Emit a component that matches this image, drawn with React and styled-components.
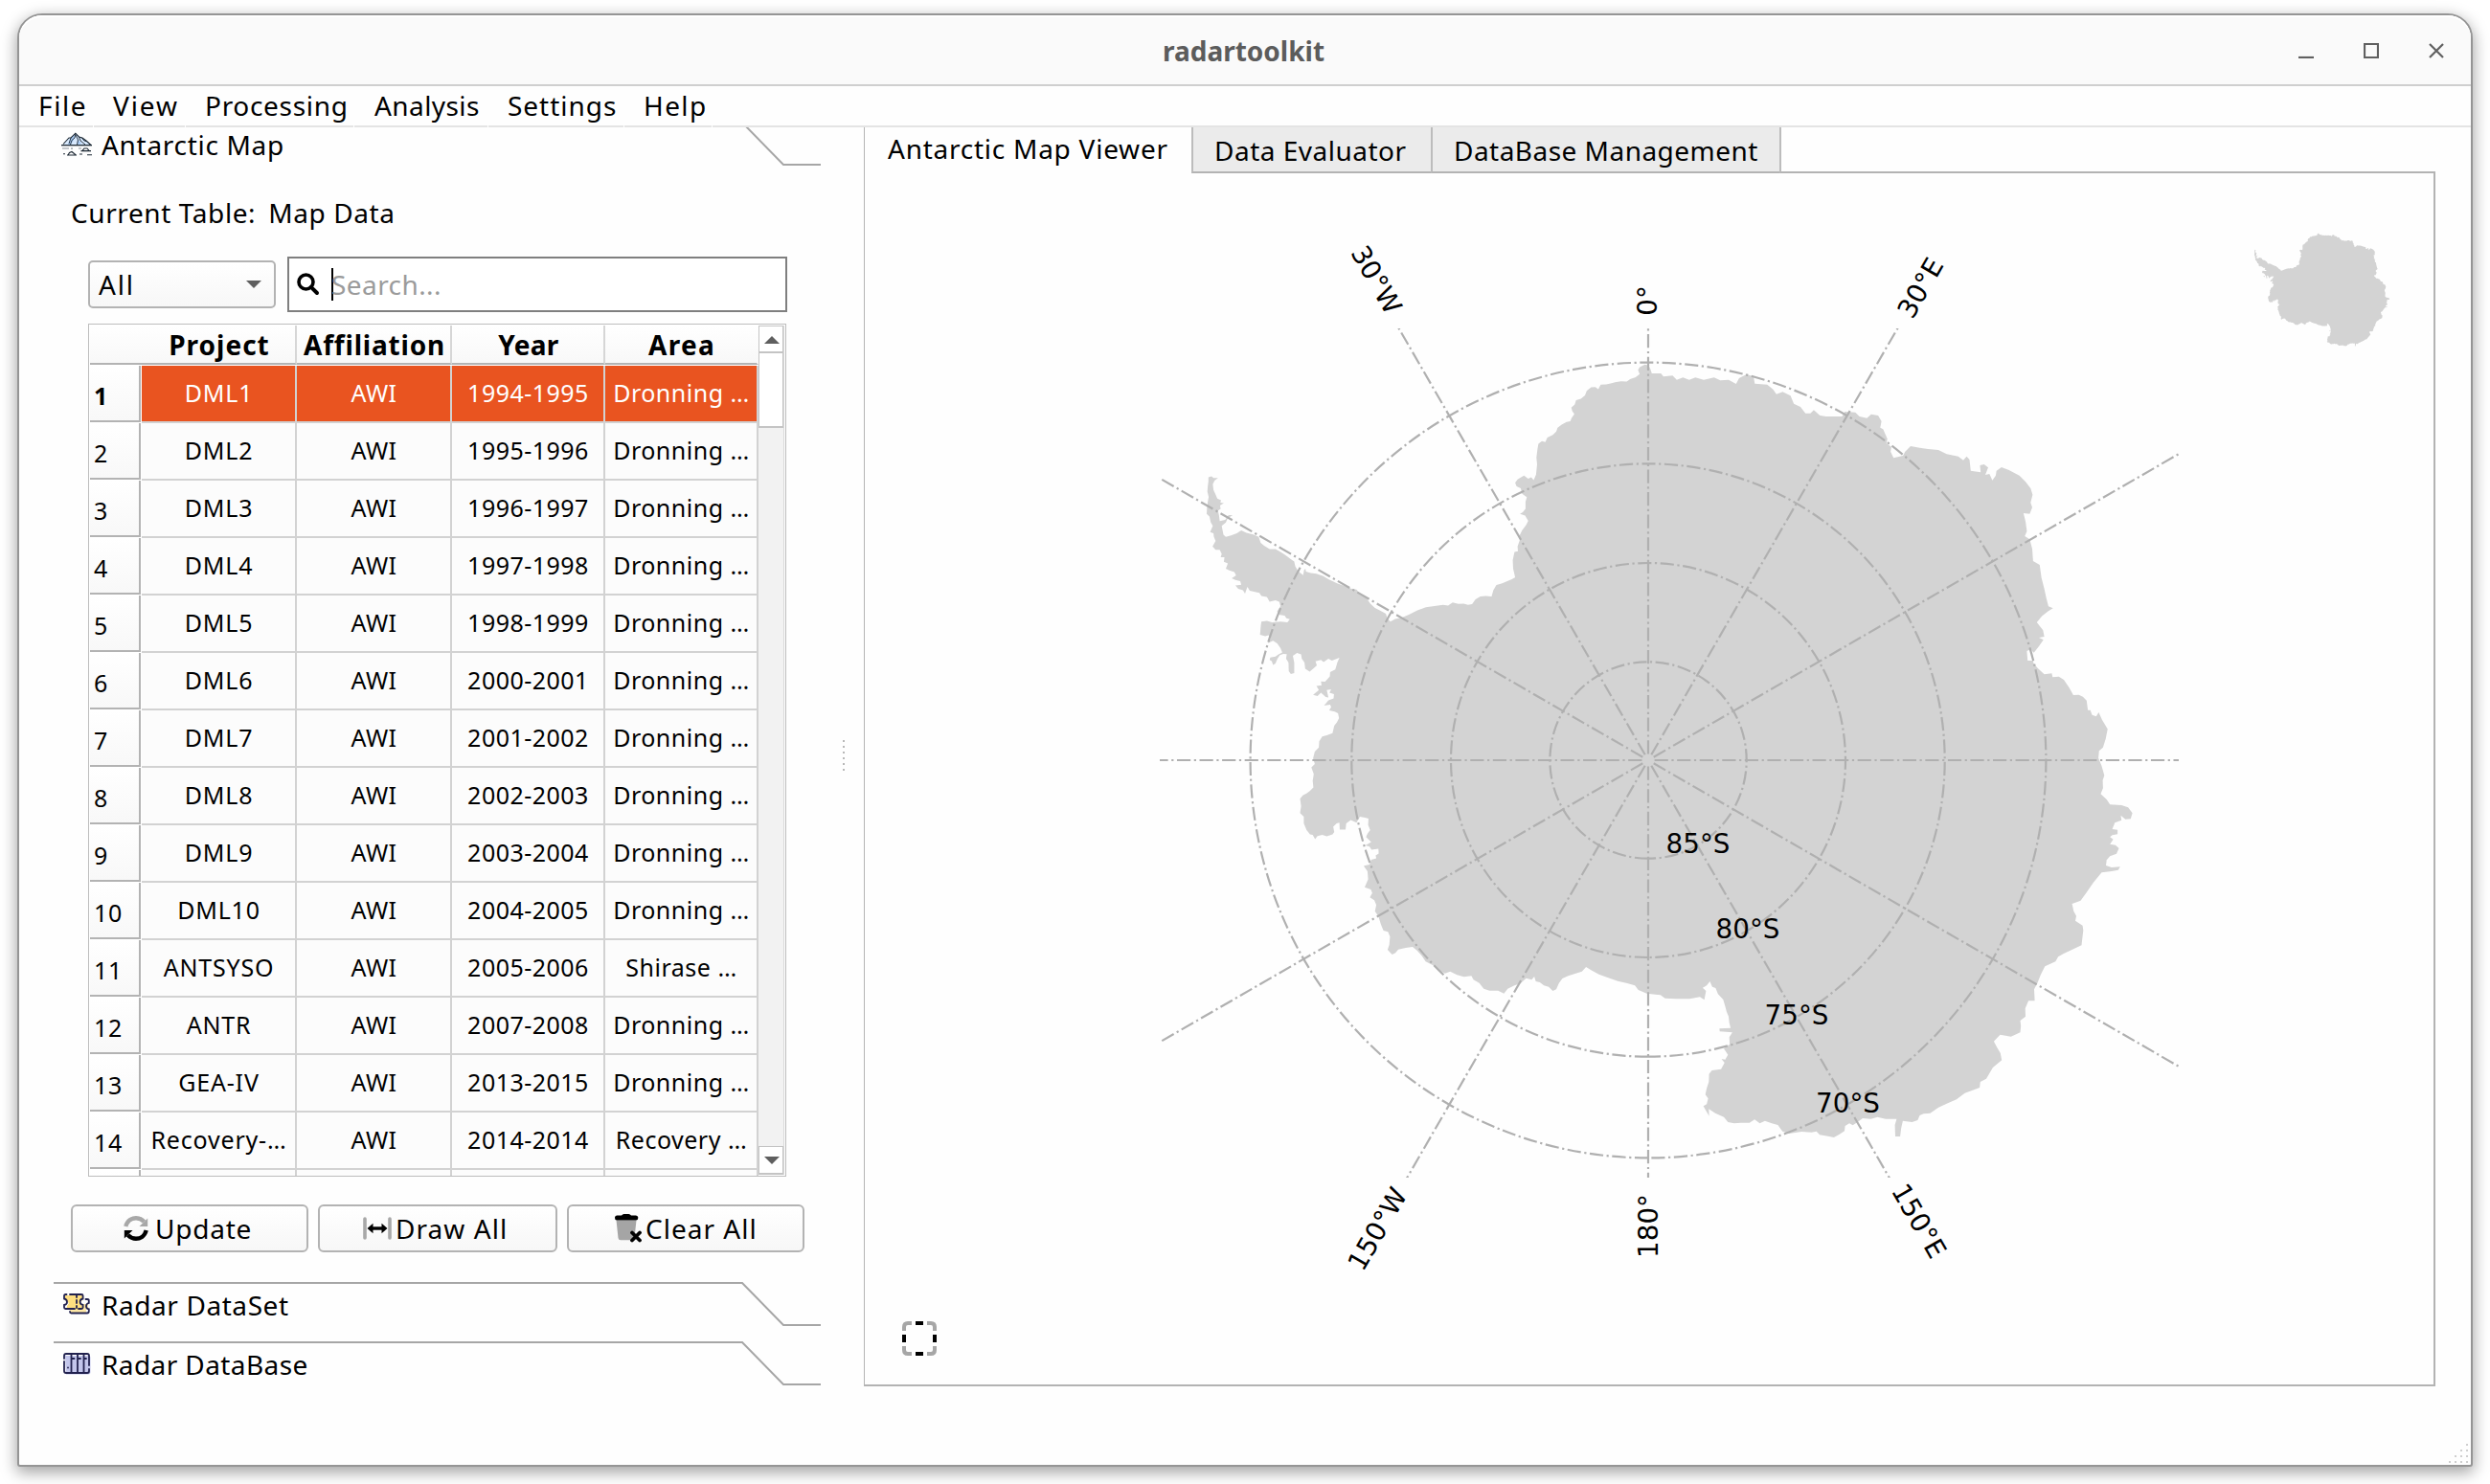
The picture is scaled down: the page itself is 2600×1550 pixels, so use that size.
import React from "react";
import styled, { createGlobalStyle, css } from "styled-components";

const GlobalStyle = createGlobalStyle`
  * { box-sizing: border-box; }
  body {
    margin: 0;
    background: #fff;
    color: #000;
    font-family: "Noto Sans", "Open Sans", sans-serif;
    font-size: 28px;
  }
`;

/* ---------- window ---------- */

const Desktop = styled.div`
  width: 2600px;
  height: 1550px;
  padding: 14px 18px 18px;
  overflow: hidden;
`;

const Window = styled.main`
  width: 2564px;
  height: 1518px;
  display: flex;
  flex-direction: column;
  border: 2px solid #959595;
  border-radius: 26px 26px 3px 3px;
  background: #fefefe;
  box-shadow: 0 5px 16px 1px rgba(0, 0, 0, 0.36);
`;

const TitleBar = styled.header`
  height: 74px;
  flex: none;
  display: grid;
  grid-template-columns: 1fr auto 1fr;
  align-items: center;
  border-bottom: 2px solid #cfcfcf;
  border-radius: 24px 24px 0 0;
  background: #fafafa;
  box-shadow: inset 0 2px #fff;
`;

const Title = styled.h1`
  grid-column: 2;
  margin: 0 3px 0 0;
  padding-top: 1px;
  font-size: 28px;
  font-weight: 700;
  letter-spacing: 0;
  line-height: 72px;
  color: #5c5c5c;
`;

const WindowButtons = styled.div`
  display: flex;
  justify-content: flex-end;
  gap: 52px;
  padding-right: 28px;
`;

const Label = styled.span`
  letter-spacing: ${(p) => p.$track || 0}px;
  white-space: pre;
`;

/* ---------- menu ---------- */

const MenuBar = styled.nav`
  height: 43px;
  flex: none;
  display: flex;
  gap: 1px;
  line-height: 40px;
`;

const MenuItem = styled.div`
  width: ${(p) => p.$width}px;
  padding-left: ${(p) => p.$inset}px;
  border-bottom: 2px solid #e4e4e4;
`;

const MenuRest = styled.div`
  flex: 1;
  border-bottom: 2px solid #e4e4e4;
`;

const Body = styled.div`
  flex: 1;
  min-height: 0;
  display: flex;
  padding: 0 37px 82px 36px;
`;

/* ---------- tool box ---------- */

const ToolBox = styled.aside`
  width: 801px;
  display: flex;
  flex-direction: column;
  gap: 16px;
  overflow: hidden;
`;

const ToolTabRow = styled.div`
  position: relative;
  height: 46px;
  flex: none;
  display: flex;
  padding: 2px 0 0 8px;
  line-height: 44px;
  margin-top: ${(p) => (p.$first ? -6 : 0)}px;
`;

const TabOutline = styled.svg`
  position: absolute;
  inset: 0;
`;

const TabIcon = styled.span`
  width: 42px;
  display: flex;
  align-items: flex-start;
  padding-top: 9px;
`;

const Page = styled.section`
  height: 1134px;
  flex: none;
  display: flex;
  flex-direction: column;
  padding: 13px 17px 0 18px;
`;

const Caption = styled.p`
  margin: 0;
  display: flex;
  gap: 13px;
  line-height: 41px;
  height: 40px;
`;

const FilterRow = styled.div`
  display: flex;
  align-items: center;
  gap: 12px;
  padding-left: 18px;
  margin-top: 26px;
`;

const Combo = styled.div`
  width: 196px;
  height: 50px;
  display: flex;
  align-items: center;
  justify-content: space-between;
  padding: 0 13px 0 9px;
  border: 2px solid #b3b3b3;
  border-radius: 5px;
  background: linear-gradient(#fff, #f7f7f7);
`;

const SearchBox = styled.div`
  width: 522px;
  height: 58px;
  display: flex;
  align-items: center;
  padding-left: 8px;
  border: 2px solid #7f7f7f;
  background: #fff;
  color: #9b9b9b;
`;

const Caret = styled.span`
  width: 2px;
  height: 34px;
  margin: 0 -2px 0 12px;
  background: #000;
`;

/* ---------- table ---------- */

const TableFrame = styled.div`
  width: 729px;
  height: 891px;
  display: flex;
  margin: 12px 0 0 18px;
  padding: 1px 1px 0;
  border: 1px solid #bdbdbd;
  background: #fff;
  overflow: hidden;
`;

const Grid = styled.div`
  width: 698px;
  overflow: hidden;
`;

const Row = styled.div`
  display: grid;
  grid-template-columns: 54px 162px 162px 160px 160px;
`;

const ColumnHead = styled.div`
  height: 41px;
  margin-bottom: 1px;
  padding-left: 2px;
  border-right: ${(p) => (p.$corner ? 0 : 2)}px solid ${(p) => (p.$last ? "transparent" : "#d6d6d6")};
  border-bottom: 2px solid #b3b3b3;
  background: linear-gradient(#fff, #f8f8f8);
  font-weight: 700;
  line-height: 40px;
  text-align: center;
`;

const RowHead = styled.div`
  width: 53px;
  height: 59px;
  padding: 2px 0 0 4px;
  border-right: 2px solid #b3b3b3;
  border-bottom: 2px solid #b3b3b3;
  background: linear-gradient(#fff, #f8f8f8);
  font-size: 25px;
  font-weight: ${(p) => (p.$current ? 700 : 400)};
  letter-spacing: 0.6px;
  line-height: 58px;
`;

const Cell = styled.div`
  height: 60px;
  padding-left: 1px;
  border-right: 2px solid #d2d2d2;
  border-bottom: 2px solid #d2d2d2;
  background: #fcfcfc;
  font-size: 25px;
  line-height: 57px;
  text-align: center;
  letter-spacing: ${(p) => p.$track}px;
  white-space: nowrap;
  ${(p) =>
    p.$selected &&
    css`
      background: #e95420;
      color: #fff;
    `}
`;

const ScrollBar = styled.div`
  width: 27px;
  height: 887px;
  display: flex;
  flex-direction: column;
  background: #f2f2f2;
  border-right: 1px solid #d9d9d9;
`;

const ScrollButton = styled.div`
  height: ${(p) => p.$size}px;
  display: flex;
  align-items: center;
  justify-content: center;
  padding: 1px 0 0 1px;
  border: 1px solid #c4c4c4;
  border-bottom-width: 2px;
  background: #fff;
`;

const ScrollThumb = styled.div`
  height: 78px;
  margin-bottom: auto;
  border: 1px solid #c4c4c4;
  border-top: 0;
  border-bottom-width: 2px;
  background: #fff;
`;

/* ---------- buttons ---------- */

const ButtonRow = styled.div`
  display: flex;
  gap: 10px;
  margin-top: 29px;
`;

const Button = styled.button`
  width: ${(p) => p.$width}px;
  height: 50px;
  display: flex;
  align-items: center;
  gap: ${(p) => p.$gap || 4}px;
  padding: 0 0 0 ${(p) => p.$inset}px;
  border: 2px solid #b3b3b3;
  border-radius: 6px;
  background: linear-gradient(#fff, #f7f7f7);
  color: #000;
  font: inherit;
  line-height: 46px;
`;

/* ---------- splitter and viewer ---------- */

const Splitter = styled.div`
  width: 45px;
  display: flex;
  flex-direction: column;
  align-items: center;
  gap: 4px;
  padding: 640px 0 0 3px;
`;

const SplitDot = styled.i`
  width: 2px;
  height: 2px;
  background: #b8b8b8;
`;

const Viewer = styled.section`
  flex: 1;
  display: flex;
  flex-direction: column;
`;

const TabBar = styled.div`
  height: 48px;
  flex: none;
  display: flex;
  align-items: stretch;
`;

const ViewerTab = styled.div`
  width: ${(p) => p.$width}px;
  padding-left: ${(p) => p.$inset}px;
  border-left: ${(p) => (p.$active ? "1px solid #b5b5b5" : "2px solid #bcbcbc")};
  ${(p) =>
    p.$active
      ? css`
          line-height: 44px;
        `
      : css`
          border-bottom: 2px solid #b3b3b3;
          background: #ebebeb;
          line-height: 48px;
        `}
`;

const TabBarRest = styled.div`
  flex: 1;
  border-left: 2px solid #bcbcbc;
  border-bottom: 2px solid #b3b3b3;
`;

const ViewerPanel = styled.div`
  flex: 1;
  display: flex;
  flex-direction: column;
  border: 2px solid #b3b3b3;
  border-top: 0;
  border-left: 1px solid #b5b5b5;
`;

const MapToolbar = styled.div`
  padding: 24px 0 0 39px;
`;

const Block = styled.svg`
  display: block;
  flex: none;
`;

const Grip = styled.svg`
  position: absolute;
  left: 2555px;
  top: 1506px;
`;

/* ---------- drawings ---------- */

const MountainIcon = () => (
  <Block width="34" height="26" viewBox="0 0 34 26" fill="none" stroke="#1b2733" strokeWidth="1.1">
    <path d="M2 13.5 L7.5 6.5 L9.5 6 L14.8 1 L18 4 L21 5.5 L26 8.5 L31 13.5Z" fill="#d8e9fd" stroke="none" />
    <path d="M7 13 L10 6 L14 2 L13 8 L10 13Z M17 13 L17 7 L21 12Z" fill="#a9cbf5" stroke="none" />
    <path d="M2 12.5 L8 6 L10 6 L14.8 1.2 L18.5 5 L22 6 L26 9 L31 13.5" />
    <path d="M14.8 1.5 L14 6 L11 8.5 L9.5 13 M15 3 L17.5 8 L16.5 13 M18.5 5 L20 9 L25 13 M21.5 6 L24 9 L26 9.5 M10 6 L8 12" strokeWidth="0.9" />
    <path d="M0 13.7 H32" strokeWidth="1.3" />
    <path d="M1 17 H8 M10 17.2 H12 M18 17 H21" strokeWidth="1.2" stroke="#8b949c" />
    <path d="M7 24 L8.5 21.5 L11 20.5 L13.5 22.5 L15 23.6 M6 24 H16 M22 19.3 L24 17 H27 L29 19.3 M20.5 19.6 H31 M2 22.8 H4 M19 23 H22 M27 23.8 H32" />
  </Block>
);

const TicketsIcon = () => (
  <Block width="32" height="26" viewBox="0 0 32 26" fill="none" stroke="#22224f" strokeWidth="1.8" strokeLinecap="round">
    <path d="M4 3 H22 V8 L19 11 L22 14 V18 H6 V14 L8 11 L4 8Z" fill="#ffdf80" stroke="none" />
    <path d="M22 12 H28 V17 H26 V21 H9 V18 H22Z" fill="#ffe9a8" stroke="none" />
    <path d="M5.5 2 H4.5 Q3 2 3 3.6 V6.5 Q6 7 6 10 Q6 12.5 3 13 V15.5 Q3 17 4.5 17 H14 M9 2 H21 Q22.6 2 22.6 3.5 V6.5 Q19.6 7 19.6 9.8 Q19.6 12.5 22.6 13 V15.5 Q22.6 17 21 17 H18" />
    <path d="M16 3 V5 M16 8 V11 M16 14 V16" />
    <path d="M25.5 7 H27 Q28.8 7 28.8 8.5 V11 Q26 11.7 26 14.2 Q26 16.8 28.8 17.3 V19.5 Q28.8 21.5 27 21.5 H10.5 Q9 21.5 9 20" />
  </Block>
);

const ShelfIcon = () => (
  <Block width="32" height="26" viewBox="0 0 32 26" fill="none" stroke="#22224f" strokeWidth="1.8" strokeLinecap="round">
    <path d="M4 4 H29 Q30.5 4 30.5 6 V21 Q30.5 23.5 28 23.5 H5Z" fill="#c3c6ec" stroke="none" />
    <path d="M3 7 V4 Q3 2 5 2 H27 Q29 2 29 4 V14 M29 18 V20 Q29 22 27 22 H5 Q3 22 3 20 V10" />
    <path d="M10.5 3 V21 M17 3 V21 M23.5 3 V21 M10.5 7 H13.5 M17 7 H20 M23.5 7 H26 M7 16.5 V16.6" />
  </Block>
);

const SearchIcon = () => (
  <Block width="24" height="24" viewBox="0 0 24 24" fill="none" stroke="#000">
    <circle cx="9.5" cy="9.5" r="7.5" strokeWidth="3.6" />
    <path d="M14.8 14.8 L21 21" strokeWidth="4" strokeLinecap="round" />
  </Block>
);

const UpdateIcon = () => (
  <Block width="28" height="28" viewBox="0 0 28 28" fill="none" strokeWidth="4.4">
    <path d="M2.3 12 C4 5.5 9 3.2 13 3.2 C17 3.2 19 4.5 21.5 7" stroke="#a8a8a8" />
    <path d="M25.2 3.5 V12 H16.5Z" fill="#a8a8a8" />
    <path d="M23.7 16 C22 22.5 17 24.8 13 24.8 C9 24.8 7 23.5 4.5 21" stroke="#000" />
    <path d="M0.8 24.5 V16 H9.5Z" fill="#000" />
  </Block>
);

const ExtentIcon = () => (
  <Block width="30" height="24" viewBox="0 0 30 24">
    <path d="M2 2 V22 M28 2 V22" stroke="#a8a8a8" strokeWidth="3.6" strokeLinecap="round" />
    <path d="M8 12 H22" stroke="#000" strokeWidth="3.4" />
    <path d="M4.5 12 L10.5 6.8 V17.2Z M25.5 12 L19.5 6.8 V17.2Z" fill="#000" />
  </Block>
);

const TrashIcon = () => (
  <Block width="28" height="32" viewBox="0 0 28 32">
    <path d="M1.5 7.5 H22.5 L20.5 26 Q20.3 28.2 18 28.2 H6 Q3.8 28.2 3.5 26Z" fill="#a5a5a5" />
    <path d="M2 2.5 H7 Q8 1 9.5 1 H14.5 Q16 1 17 2.5 H22 Q24.3 2.5 24.3 5 Q24.3 7.5 22 7.5 H2 Q0 7.5 0 5 Q0 2.5 2 2.5Z" fill="#000" />
    <path d="M18 20.5 L26 28.5 M26 20.5 L18 28.5" stroke="#000" strokeWidth="3.8" strokeLinecap="round" />
  </Block>
);

const SelectAreaIcon = () => (
  <Block width="36" height="36" viewBox="0 0 36 36" fill="none" strokeWidth="4">
    <path d="M10 2 H6 Q2 2 2 6 V10 M26 2 H30 Q34 2 34 6 V10 M34 26 V30 Q34 34 30 34 H26 M10 34 H6 Q2 34 2 30 V26" stroke="#a6a6a6" />
    <path d="M14 2 H22 M14 34 H22 M2 14 V22 M34 14 V22" stroke="#000" />
  </Block>
);

const Arrow = ({ up }) => (
  <Block width="16" height="8" viewBox="0 0 16 8">
    <path d={up ? "M0 8 L8 0 L16 8Z" : "M0 0 L8 8 L16 0Z"} fill="#5f5f5f" />
  </Block>
);

/* ---------- map ---------- */

/* Coastline digitised in four sheets, each with its own origin and units per map unit. */
const COAST_SHEETS = [
  {
    origin: [1180, 360],
    scale: [2.8, 2.8],
    points:
      "1519,62 1505,58 1490,66 1485,74 1490,86 1478,95 1462,101 1452,108 1435,107 1418,110 1405,113 1392,116 1376,117 1369,130 1360,124 1348,125 1335,135 1330,148 1318,158 1304,162 1300,175 1290,184 1293,195 1299,203 1291,214 1287,224 1276,226 1262,234 1250,243 1246,254 1236,264 1220,272 1214,285 1204,282 1194,290 1191,305 1188,330 1190,350 1187,380 1180,396 1173,388 1164,392 1152,383 1143,388 1133,394 1126,404 1130,414 1142,420 1146,436 1160,446 1156,460 1156,480 1148,490 1140,495 1155,500 1164,515 1158,527 1146,543 1138,560 1140,570 1133,590 1134,604 1124,606 1119,630 1120,655 1126,680 1116,686 1103,692 1086,699 1071,703 1062,718 1057,736 1040,735 1024,736 1010,745 1000,759 988,761 975,757 960,758 943,754 930,763 915,761 890,764 865,768 840,777 815,790 795,798 775,802 761,810 752,800 748,787 730,777 716,770 703,758 690,740 675,733 662,716 648,714 625,705 605,698 580,686 565,677 545,670 528,668 514,664 513,656 509,658 506,674 498,668 490,660 483,648 480,634 468,626 455,616 440,606 425,598 408,598 392,588 382,580 376,562 360,555 340,550 325,543 312,552 295,558 280,562 273,556 270,540 268,530 280,520 285,508 300,498 288,498 278,512 262,516 260,500 257,485 265,480 263,470 274,463 264,462 266,455 255,450 250,438 244,425 242,408 247,398 257,390 244,390 238,385 229,388 229,400 227,415 226,430 230,445 227,460 225,475 224,495 232,503 236,520 242,530 234,548 244,552 245,562 250,574 241,590 250,600 262,600 268,612 265,622 276,622 274,635 286,640 280,655 290,660 305,665 310,675 297,683 308,688 322,692 325,702 308,704 316,714 330,718 336,728 343,708 350,720 362,722 378,726 384,735 400,738 408,752 425,748 436,752 440,764 430,780 434,790 452,792 457,800 467,803 460,812 440,810 415,812 400,808 384,810 382,825 380,848 395,853 405,850 412,858 403,873 418,866 430,874 440,888 445,900 434,906 425,912 410,915 408,922 414,925 418,937 425,932 431,918 438,908 448,904 458,905 456,918 463,930 464,955 470,963 480,960 480,930 476,910 488,902 500,906 502,918 510,930 512,948 525,956 535,948 546,938 542,926 558,922 566,928 580,918 590,924 612,916 606,930 600,950 585,958 584,970 570,986 558,985 560,996 545,998 552,1010 535,1024 548,1028 558,1018 572,1030 580,1032 575,1010 588,1008 583,1018 596,1022 595,1035 580,1040 567,1056 585,1053 588,1060 582,1070 598,1073 608,1078 611,1092 605,1104 597,1114 592,1136 575,1142 562,1146 553,1160 552,1178 540,1190 535,1210 540,1226 530,1236 537,1256 534,1275 536,1295 526,1305 517,1312 505,1318 497,1328 500,1350 497,1370 508,1380 508,1400 516,1420 526,1432 534,1434 541,1446 548,1437 562,1434 575,1438 592,1432 597,1425 594,1410 604,1400 612,1398 613,1418 630,1418 632,1400 645,1390 662,1398 672,1380 690,1384 697,1386 696,1405 702,1420 694,1430 690,1440 705,1455 688,1464 700,1468 706,1477 726,1474 727,1488 718,1494 720,1502 705,1506 700,1520 684,1524",
  },
  {
    origin: [1300, 760],
    scale: [2.8, 3],
    points:
      "348,435 358,450 360,475 350,500 368,507 372,518 365,532 378,541 384,556 380,575 390,592 398,618 405,636 418,640 424,655 422,680 417,696 430,711 440,706 448,695 470,690 490,687 503,698 517,715 528,733 550,745 570,762 585,770 600,764 620,775 640,781 662,778 668,790 685,800 698,818 715,824 740,824 757,833 768,818 788,808 805,802 822,785 838,790 846,780 850,795 862,798 874,808 888,812 900,825 910,820 918,800 928,786 945,778 965,771 985,764 997,750 1012,760 1035,773 1060,783 1090,794 1115,800 1140,808 1150,822 1175,833 1200,836 1215,838 1228,848 1260,850 1300,850 1330,844 1343,853 1348,825 1338,815 1350,808 1359,795 1366,812 1376,816 1383,835 1398,852 1403,870 1408,890 1414,905 1416,925 1420,941 1387,943 1388,952 1416,954 1425,955 1416,970 1417,992 1400,1006 1412,1025 1404,1040 1393,1038 1402,1050 1392,1070 1365,1074 1357,1085 1356,1110 1350,1130 1346,1150 1354,1162 1350,1180 1340,1186 1357,1217 1356,1195 1375,1208 1400,1220 1412,1236 1430,1240 1450,1238 1475,1238 1490,1228 1505,1240 1520,1232 1540,1240 1558,1245",
  },
  {
    origin: [1740, 760],
    scale: [2.904, 3],
    points:
      "352,1265 372,1272 410,1266 440,1268 455,1265 465,1276 490,1280 508,1284 525,1274 540,1264 542,1248 555,1240 565,1246 580,1236 595,1224 620,1226 640,1220 665,1226 698,1226 693,1245 694,1281 709,1281 712,1255 717,1232 745,1236 762,1230 768,1215 780,1210 800,1208 825,1190 850,1178 880,1165 905,1145 950,1128 952,1110 970,1100 990,1065 1017,1042 1013,1020 1003,1003 993,983 1012,962 1045,968 1073,955 1075,935 1073,918 1089,905 1088,880 1098,856 1117,856 1115,820 1125,800 1135,775 1148,748 1180,733 1188,718 1205,708 1225,698 1259,682 1264,635 1262,620 1240,605 1243,590 1235,575 1230,552 1256,542 1275,515 1295,485 1320,454 1350,450 1370,446 1376,436 1350,438 1333,432 1335,415 1345,403 1365,395 1372,378 1362,368 1345,365 1355,350 1345,343 1352,337 1368,334 1368,320 1352,318 1360,298 1380,290 1378,275 1392,287 1408,286 1413,268 1400,250 1380,243 1345,241 1335,225 1317,208 1324,190 1323,165 1328,150 1320,120 1310,95 1312,73 1324,62 1332,35 1338,5",
  },
  {
    origin: [1560, 360],
    scale: [2.306, 3],
    points:
      "1478,1205 1473,1195 1464,1175 1456,1152 1450,1165 1440,1160 1436,1145 1430,1145 1427,1115 1418,1103 1408,1097 1395,1098 1385,1075 1372,1050 1360,1040 1345,1042 1343,1030 1325,1033 1310,1015 1300,1000 1297,990 1285,990 1283,960 1292,955 1300,965 1312,945 1323,925 1312,918 1325,915 1322,895 1307,870 1320,850 1335,835 1346,826 1335,820 1330,795 1325,765 1318,730 1314,690 1298,678 1296,640 1290,610 1278,600 1283,585 1280,555 1275,528 1290,530 1296,510 1292,495 1297,470 1292,450 1280,430 1265,410 1240,393 1222,384 1210,395 1208,410 1200,425 1193,405 1183,408 1190,385 1180,375 1170,378 1172,400 1148,395 1145,360 1138,350 1130,362 1118,350 1090,343 1070,330 1045,327 1025,323 1003,318 990,335 985,348 962,355 955,335 957,320 945,310 947,295 937,265 930,260 933,240 925,222 908,218 898,230 880,225 870,212 845,210 838,225 800,225 785,222 770,205 762,215 750,215 738,195 722,185 714,160 695,148 680,155 672,140 658,125 628,122 625,100 608,93 590,105 583,123 565,110 545,112 530,103 505,110 485,103 470,110 455,103 440,110 430,97 408,100 402,90 380,90 376,75 371,62",
  },
];

const COAST =
  "M" +
  COAST_SHEETS.flatMap(({ origin, scale, points }) =>
    points.split(" ").map((pair) => {
      const [x, y] = pair.split(",").map(Number);
      return `${(origin[0] + x / scale[0]).toFixed(1)} ${(origin[1] + y / scale[1]).toFixed(1)}`;
    })
  ).join("L") +
  "Z";

const POLE = { x: 1721, y: 794 };
const PARALLELS = [102.7, 206, 309.7, 415.4];
const MERIDIANS = Array.from({ length: 12 }, (_, i) => (i * Math.PI) / 6);

const MERIDIAN_LABELS = [
  { text: "30°W", x: 1437.5, y: 292, turn: 60 },
  { text: "0°", x: 1720, y: 314, turn: -90 },
  { text: "30°E", x: 2005, y: 300.5, turn: -60 },
  { text: "150°W", x: 1438, y: 1283.5, turn: -60 },
  { text: "180°", x: 1720.5, y: 1280.5, turn: -90 },
  { text: "150°E", x: 2004, y: 1275, turn: 60 },
];

const PARALLEL_LABELS = [
  { text: "85°S", x: 1773, y: 891 },
  { text: "80°S", x: 1825, y: 980 },
  { text: "75°S", x: 1876, y: 1070 },
  { text: "70°S", x: 1929.5, y: 1162 },
];

const MapText = styled.text`
  font-family: "DejaVu Sans", sans-serif;
  font-size: 27.78px;
  text-anchor: middle;
`;

const AntarcticMap = () => (
  <Block width="1638" height="1175" viewBox="903 181 1638 1175">
    <defs>
      <clipPath id="frame">
        <rect x="1211" y="343" width="1064" height="887" />
      </clipPath>
    </defs>
    <path d={COAST} fill="#d3d3d3" />
    <g clipPath="url(#frame)" fill="none" stroke="#b0b0b0" strokeWidth="2.2" strokeDasharray="14.22 3.56 2.22 3.56">
      {PARALLELS.map((r) => (
        <path key={r} d={`M${POLE.x} ${POLE.y + r}a${r} ${r} 0 0 1 0 ${-2 * r}a${r} ${r} 0 0 1 0 ${2 * r}`} />
      ))}
      {MERIDIANS.map((a) => (
        <path
          key={a}
          d={`M${POLE.x + 6.6 * Math.sin(a)} ${POLE.y - 6.6 * Math.cos(a)}L${POLE.x + 700 * Math.sin(a)} ${POLE.y - 700 * Math.cos(a)}`}
        />
      ))}
    </g>
    {MERIDIAN_LABELS.map((l) => (
      <MapText key={l.text} transform={`translate(${l.x} ${l.y}) rotate(${l.turn})`} y="10">
        {l.text}
      </MapText>
    ))}
    {PARALLEL_LABELS.map((l) => (
      <MapText key={l.text} x={l.x} y={l.y}>
        {l.text}
      </MapText>
    ))}
    <path d={COAST} fill="#d3d3d3" transform="translate(2170 188.1) scale(0.146)" />
  </Block>
);

/* ---------- data ---------- */

const MENUS = [
  { text: "File", width: 77, inset: 20, track: 1.6 },
  { text: "View", width: 95, inset: 20, track: 1.9 },
  { text: "Processing", width: 175, inset: 20, track: 0.7 },
  { text: "Analysis", width: 139, inset: 21, track: 0.42 },
  { text: "Settings", width: 141, inset: 20, track: 0.98 },
  { text: "Help", width: 91, inset: 20, track: 1.4 },
];

const COLUMNS = [
  { text: "Project", track: 1 },
  { text: "Affiliation", track: 0.8 },
  { text: "Year", track: 0.3 },
  { text: "Area", track: 1.3 },
];

const RECORDS = [
  ["DML1", "AWI", "1994-1995", "Dronning …"],
  ["DML2", "AWI", "1995-1996", "Dronning …"],
  ["DML3", "AWI", "1996-1997", "Dronning …"],
  ["DML4", "AWI", "1997-1998", "Dronning …"],
  ["DML5", "AWI", "1998-1999", "Dronning …"],
  ["DML6", "AWI", "2000-2001", "Dronning …"],
  ["DML7", "AWI", "2001-2002", "Dronning …"],
  ["DML8", "AWI", "2002-2003", "Dronning …"],
  ["DML9", "AWI", "2003-2004", "Dronning …"],
  ["DML10", "AWI", "2004-2005", "Dronning …"],
  ["ANTSYSO", "AWI", "2005-2006", "Shirase …"],
  ["ANTR", "AWI", "2007-2008", "Dronning …"],
  ["GEA-IV", "AWI", "2013-2015", "Dronning …"],
  ["Recovery-…", "AWI", "2014-2014", "Recovery …"],
];

const CELL_TRACKS = [0.8, 0.4, 0.48, 0.5];

const ToolTab = ({ icon, text, track, first }) => (
  <ToolTabRow $first={first}>
    <TabOutline width="801" height="50" viewBox="0 0 801 50" fill="none" stroke="#a6a6a6" strokeWidth="2">
      <path d="M0 1 H719 L762 45 H801" />
    </TabOutline>
    <TabIcon>{icon}</TabIcon>
    <Label $track={track}>{text}</Label>
  </ToolTabRow>
);

const RecordTable = () => (
  <TableFrame>
    <Grid>
      <Row>
        <ColumnHead $corner />
        {COLUMNS.map((c, i) => (
          <ColumnHead key={c.text} $last={i === 3}>
            <Label $track={c.track}>{c.text}</Label>
          </ColumnHead>
        ))}
      </Row>
      {RECORDS.map((record, r) => (
        <Row key={record[2]}>
          <RowHead $current={r === 0}>{r + 1}</RowHead>
          {record.map((value, c) => (
            <Cell key={c} $selected={r === 0} $track={CELL_TRACKS[c]}>
              {value}
            </Cell>
          ))}
        </Row>
      ))}
      <Row>
        <RowHead />
        <Cell />
        <Cell />
        <Cell />
        <Cell />
      </Row>
    </Grid>
    <ScrollBar>
      <ScrollButton $size={29}>
        <Arrow up />
      </ScrollButton>
      <ScrollThumb />
      <ScrollButton $size={30}>
        <Arrow />
      </ScrollButton>
    </ScrollBar>
  </TableFrame>
);

export default function App() {
  return (
    <Desktop>
      <GlobalStyle />
      <Window>
        <TitleBar>
          <Title>radartoolkit</Title>
          <WindowButtons>
            {["M0 15 H16", "M1 1 H15 V15 H1Z", "M1 1 L15 15 M15 1 L1 15"].map((d) => (
              <Block key={d} width="16" height="16" viewBox="0 0 16 16" fill="none" stroke="#606060" strokeWidth="2.2">
                <path d={d} />
              </Block>
            ))}
          </WindowButtons>
        </TitleBar>
        <MenuBar>
          {MENUS.map((m) => (
            <MenuItem key={m.text} $width={m.width} $inset={m.inset}>
              <Label $track={m.track}>{m.text}</Label>
            </MenuItem>
          ))}
          <MenuRest />
        </MenuBar>
        <Body>
          <ToolBox>
            <ToolTab first icon={<MountainIcon />} text="Antarctic Map" track={0.7} />
            <Page>
              <Caption>
                <Label $track={0.6}>Current Table:</Label>
                <Label $track={0.6}>Map Data</Label>
              </Caption>
              <FilterRow>
                <Combo>
                  <Label $track={1.8}>All</Label>
                  <Arrow />
                </Combo>
                <SearchBox>
                  <SearchIcon />
                  <Caret />
                  <Label $track={0.42}>Search...</Label>
                </SearchBox>
              </FilterRow>
              <RecordTable />
              <ButtonRow>
                <Button $width={248} $inset={53} $gap={5}>
                  <UpdateIcon />
                  <Label $track={0.76}>Update</Label>
                </Button>
                <Button $width={250} $inset={45}>
                  <ExtentIcon />
                  <Label $track={1.06}>Draw All</Label>
                </Button>
                <Button $width={248} $inset={48}>
                  <TrashIcon />
                  <Label $track={1.01}>Clear All</Label>
                </Button>
              </ButtonRow>
            </Page>
            <ToolTab icon={<TicketsIcon />} text="Radar DataSet" track={0.58} />
            <ToolTab icon={<ShelfIcon />} text="Radar DataBase" track={0.41} />
          </ToolBox>
          <Splitter>
            {[0, 1, 2, 3, 4, 5].map((n) => (
              <SplitDot key={n} />
            ))}
          </Splitter>
          <Viewer>
            <TabBar>
              <ViewerTab $active $width={342} $inset={24}>
                <Label $track={0.75}>Antarctic Map Viewer</Label>
              </ViewerTab>
              <ViewerTab $width={250} $inset={22}>
                <Label $track={0.5}>Data Evaluator</Label>
              </ViewerTab>
              <ViewerTab $width={364} $inset={22}>
                <Label $track={0.47}>DataBase Management</Label>
              </ViewerTab>
              <TabBarRest />
            </TabBar>
            <ViewerPanel>
              <AntarcticMap />
              <MapToolbar>
                <SelectAreaIcon />
              </MapToolbar>
            </ViewerPanel>
          </Viewer>
        </Body>
        <Grip width="24" height="24" viewBox="0 0 24 24" fill="#cfcfcf">
          {[0, 1, 2, 3].flatMap((row) =>
            Array.from({ length: row + 1 }, (_, i) => (
              <rect key={`${row}-${i}`} x={20 - i * 6} y={2 + row * 6} width="2" height="2" />
            ))
          )}
        </Grip>
      </Window>
    </Desktop>
  );
}
